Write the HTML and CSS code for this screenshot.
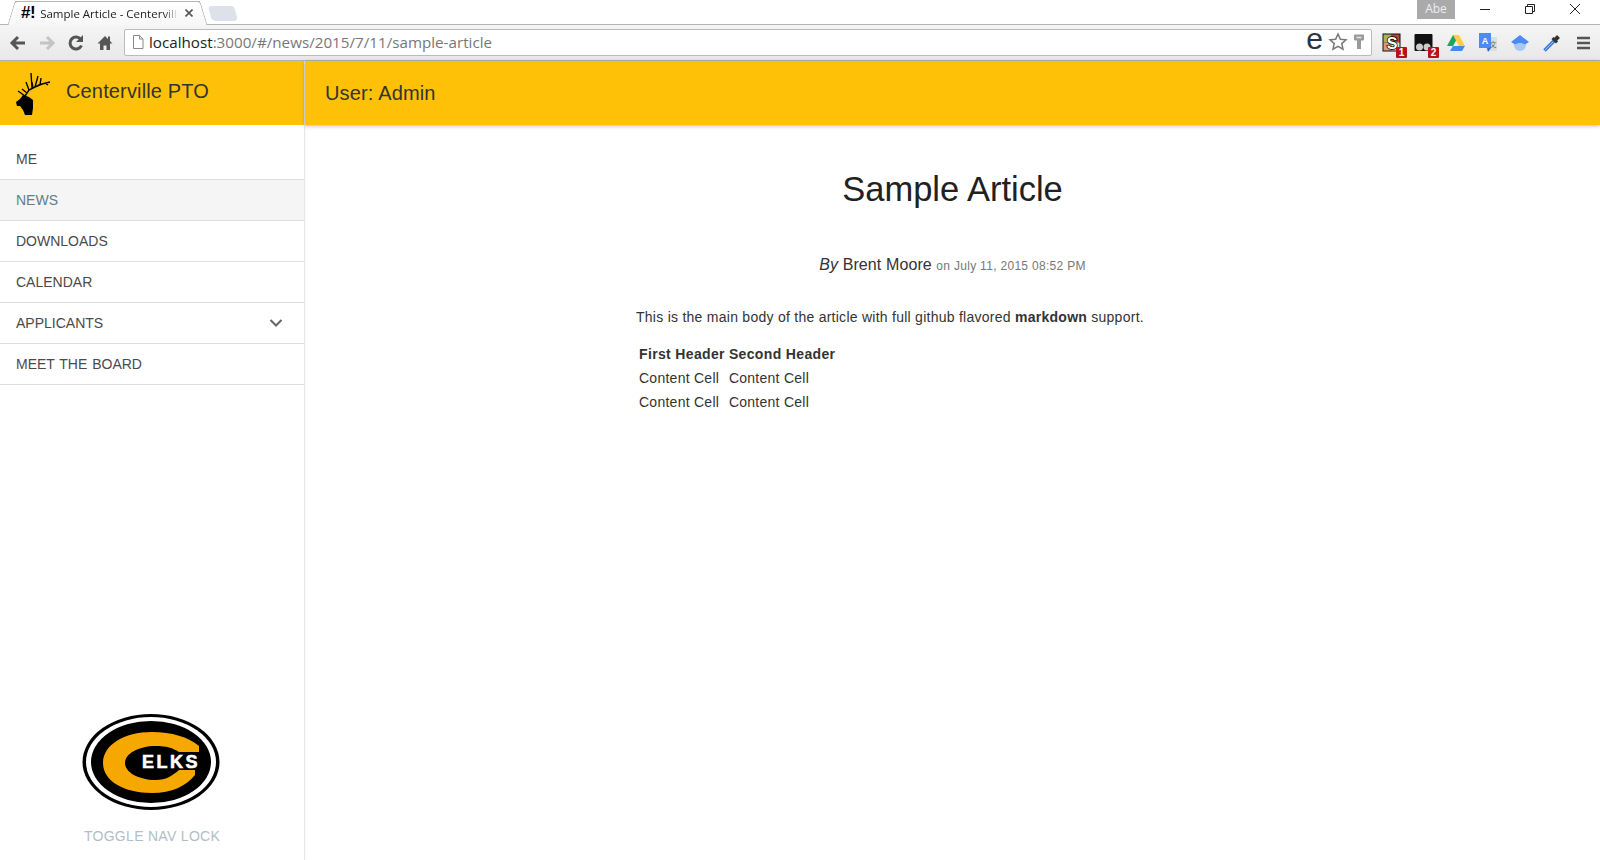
FILE: index.html
```html
<!DOCTYPE html>
<html>
  <head>
    <title>Sample Article - Centerville PTO</title>
    <link rel="stylesheet" href="styles.css">
  </head>
  <body>
    <div class="tabstrip">
      <div class="tab">
        <span class="favicon">#!</span>
        <span class="tab-title">Sample Article - Centerville PTO</span>
        <svg class="tab-close" width="8" height="8" viewBox="0 0 8 8"><path d="M.5.5l7 7M7.500.5l-7 7" stroke="#555" stroke-width="1.600"/></svg>
      </div>
      <div class="newtab"></div>
      <div class="window-controls">
        <span class="profile">Abe</span>
        <svg class="win" width="16" height="16" viewBox="0 0 16 16"><path d="M3 8.500h10" stroke="#222" fill="none"/></svg>
        <svg class="win" width="16" height="16" viewBox="0 0 16 16"><path d="M3.500 5.500h7v7h-7zM5.500 5.500v-2h7v7h-2" stroke="#222" fill="none"/></svg>
        <svg class="win" width="16" height="16" viewBox="0 0 16 16"><path d="M3 3l10 10M13 3L3 13" stroke="#222" fill="none"/></svg>
      </div>
    </div>
    <div class="toolbar">
      <svg class="nav-btn" width="20" height="20" viewBox="0 0 20 20"><path d="M17 10H5M10 4l-6 6 6 6" stroke="#555" stroke-width="3" fill="none"/></svg>
      <svg class="nav-btn" width="20" height="20" viewBox="0 0 20 20"><path d="M3 10h12M10 4l6 6-6 6" stroke="#c4c4c4" stroke-width="3" fill="none"/></svg>
      <svg class="nav-btn" width="20" height="20" viewBox="0 0 20 20"><path d="M15.500 12.500a6 6 0 1 1-.6-6" stroke="#555" stroke-width="3" fill="none"/><path d="M17 2v7h-7z" fill="#555"/></svg>
      <svg class="nav-btn" width="20" height="20" viewBox="0 0 20 20"><path d="M10 3L2.500 10.500H5V17h3.500v-4.500h3V17H15v-6.500h2.500L15 8V3.500h-2v2.500z" fill="#555"/></svg>
      <div class="omnibox">
        <svg width="14" height="16" viewBox="0 0 14 16"><path d="M2.500 1.500h6l3.500 3.500v9.500h-9.500zM8.500 1.500V5H12" stroke="#8a8a8a" fill="#fff"/></svg>
        <span class="url"><span class="host">localhost</span>:3000/#/news/2015/7/11/sample-article</span>
        <span class="omni-e">e</span>
        <svg class="star" width="20" height="20" viewBox="0 0 20 20"><path d="M10 2l2.400 5.200 5.600.6-4.200 3.800 1.200 5.600L10 14.300l-5 2.900 1.200-5.600L2 7.800l5.600-.6z" stroke="#777" stroke-width="1.500" fill="#fff"/></svg>
        <svg width="12" height="18" viewBox="0 0 12 18"><path d="M1 2.500a1 1 0 0 1 1-1h8a1 1 0 0 1 1 1v4a1 1 0 0 1-1 1H8v8.500H4V7.500H2a1 1 0 0 1-1-1z" fill="#9a9a9a"/><path d="M3.500 4.500h5" stroke="#e4e4e4" stroke-width="1.500"/></svg>
      </div>
      <div class="extensions">
        <span class="ext">
          <svg width="20" height="20" viewBox="0 0 20 20"><rect x=".5" y=".5" width="18" height="18" fill="#111"/><rect x="1.500" y="1.500" width="8" height="8" fill="#a8b45a"/><rect x="9.500" y="1.500" width="8" height="8" fill="#b04a36"/><rect x="1.500" y="9.500" width="8" height="8" fill="#d99a7c"/><rect x="9.500" y="9.500" width="8" height="8" fill="#ddd"/><text x="10" y="15.500" class="ext-s">S</text></svg>
          <span class="badge">1</span>
        </span>
        <span class="ext">
          <svg width="20" height="20" viewBox="0 0 20 20"><rect x=".5" y="1" width="18" height="17" rx="1" fill="#111"/><circle cx="5.500" cy="14" r="3.500" fill="#ccc"/><circle cx="13" cy="14" r="3.500" fill="#ccc"/></svg>
          <span class="badge">2</span>
        </span>
        <svg width="20" height="18" viewBox="0 0 20 18"><path d="M7 1h6l-6 11H1z" fill="#1ea362"/><path d="M7 1h6l6 11h-6z" fill="#ffcd40"/><path d="M4 17l3-5h12l-3 5z" fill="#4688f1"/></svg>
        <svg width="20" height="20" viewBox="0 0 20 20"><path d="M8 4h11v14H8z" fill="#ddd"/><path d="M1 0h12v15H1z" fill="#4c8bf5"/><path d="M9 15h4l-3 4z" fill="#3367c9"/><text x="7" y="10.500" class="ext-a">A</text><text x="15" y="14" class="ext-b">&#25991;</text></svg>
        <svg width="20" height="20" viewBox="0 0 20 20"><circle cx="10" cy="12" r="6" fill="#a9c8f5"/><path d="M10 2l9 7-4 2.500c-3-2-7-2-10 0L1 9z" fill="#4c8bf5"/></svg>
        <svg width="20" height="20" viewBox="0 0 20 20"><path d="M2.500 17.500L12 8" stroke="#3f78d8" stroke-width="3.500"/><path d="M3 17L11 9" stroke="#9cbdf0" stroke-width="1"/><path d="M10.500 5l4.500 4.500" stroke="#333" stroke-width="3"/><path d="M13 7l3.500-3.500" stroke="#333" stroke-width="4"/></svg>
        <svg class="menu" width="16" height="16" viewBox="0 0 16 16"><path d="M1 3h13M1 8h13M1 13h13" stroke="#555" stroke-width="2.500"/></svg>
      </div>
    </div>

    <div class="app">
      <aside class="sidebar">
        <div class="brand">
          <svg class="elk" width="38" height="46" viewBox="0 0 38 46">
            <path d="M1 32l4-3 3-4 6 2 4 3v8l-1 7h-7l-2-5-3-4-3 0z" fill="#000"/>
            <path d="M10 26l4-6 6-3 7-3 8-2M17 18L16 3M20 17l3-11M14 20l-3-8M25 15l1-7M12 23L7 19M10 26L3 21M30 13l3 2M18 18l-1-6M22 16l4-2" stroke="#000" stroke-width="1.400" fill="none"/>
          </svg>
          <span class="brand-name">Centerville PTO</span>
        </div>
        <nav class="side-nav">
          <a class="side-link" href="#">ME</a>
          <a class="side-link active" href="#">NEWS</a>
          <a class="side-link" href="#">DOWNLOADS</a>
          <a class="side-link" href="#">CALENDAR</a>
          <a class="side-link" href="#">APPLICANTS
            <svg width="14" height="10" viewBox="0 0 14 10"><path d="M1.500 2l5.500 5.500L12.500 2" stroke="#666" stroke-width="2" fill="none"/></svg>
          </a>
          <a class="side-link" href="#">MEET THE BOARD</a>
        </nav>
        <div class="side-foot">
          <svg class="elks-logo" width="138" height="98" viewBox="0 0 138 98">
            <ellipse cx="69" cy="49" rx="68.500" ry="48" fill="#000"/>
            <ellipse cx="69" cy="49" rx="65" ry="45" fill="#fff"/>
            <ellipse cx="69" cy="49" rx="60" ry="41" fill="#000"/>
            <path d="M117 33C106 24 90 19 70 19C42 19 21 32 21 50C21 68 42 80 70 80C90 80 104 73 113 62V57H97C90 63 84 67 74 67C56 67 43 59 43 50C43 41 56 33 74 33C84 33 91 35 97 39H117z" fill="#f7a800"/>
            <text x="60" y="55" class="elks-text">ELKS</text>
          </svg>
          <a class="toggle-lock" href="#">TOGGLE NAV LOCK</a>
        </div>
      </aside>
      <div class="content">
        <header class="topbar">User: Admin</header>
        <main class="article">
          <h1>Sample Article</h1>
          <p class="byline"><em>By</em> Brent Moore <small>on July 11, 2015 08:52 PM</small></p>
          <div class="article-body">
            <p>This is the main body of the article with full github flavored <strong>markdown</strong> support.</p>
            <table>
              <tr>
                <th>First Header</th>
                <th>Second Header</th>
              </tr>
              <tr>
                <td>Content Cell</td>
                <td>Content Cell</td>
              </tr>
              <tr>
                <td>Content Cell</td>
                <td>Content Cell</td>
              </tr>
            </table>
          </div>
        </main>
      </div>
    </div>
  </body>
</html>
```
FILE: styles.css
```css
/* Browser chrome */
html, body {
  height: 100%;
}
body {
  display: flex;
  flex-direction: column;
  font-family: "Liberation Sans", Arial, sans-serif;
  height: 860px;
  margin: 0;
  overflow: hidden;
}
.tabstrip {
  align-items: flex-end;
  background-color: #fff;
  display: flex;
  height: 24px;
}
.tab {
  align-items: center;
  background: linear-gradient(#fff, #f7f7f7);
  border-top: 1px solid #b5b5b5;
  box-sizing: border-box;
  display: flex;
  height: 24px;
  margin-bottom: -1px;
  margin-left: 15px;
  padding: 0 7px 1px 6px;
  position: relative;
  width: 185px;
  z-index: 1;
}
.tab::before,
.tab::after {
  background: linear-gradient(#fff, #f7f7f7);
  bottom: 0;
  content: "";
  position: absolute;
  top: -1px;
  width: 14px;
  z-index: -1;
}
.tab::before {
  border-left: 1px solid #b5b5b5;
  border-radius: 3px 0 0 0;
  border-top: 1px solid #b5b5b5;
  left: -4px;
  transform: skewX(-17deg);
}
.tab::after {
  border-radius: 0 3px 0 0;
  border-right: 1px solid #b5b5b5;
  border-top: 1px solid #b5b5b5;
  right: -4px;
  transform: skewX(17deg);
}
.favicon {
  font-size: 17px;
  font-weight: bold;
  letter-spacing: -0.5px;
  margin-right: 5px;
}
.tab-title {
  color: #222;
  flex: 1;
  font-family: "Open Sans", sans-serif;
  font-size: 11.5px;
  mask-image: linear-gradient(to right, #000 90%, transparent);
  overflow: hidden;
  white-space: nowrap;
}
.tab-close {
  margin-left: 7px;
}
.newtab {
  background-color: #dde2ea;
  border-radius: 3px 3px 4px 4px;
  height: 15px;
  margin: 0 0 3px 10px;
  transform: skewX(15deg);
  width: 26px;
}
.window-controls {
  align-items: flex-start;
  align-self: flex-start;
  display: flex;
  margin-left: auto;
}
.profile {
  background-color: #aaa;
  color: #eee;
  font-family: "Open Sans", sans-serif;
  font-size: 12px;
  height: 19px;
  line-height: 18px;
  margin-right: 22px;
  text-align: center;
  width: 38px;
}
.win {
  margin: 1px 29px 0 0;
}
.win:last-child {
  margin-right: 17px;
}
.toolbar {
  align-items: center;
  background: linear-gradient(#f5f5f5, #e8e8e8);
  border-bottom: 1px solid #b4b4b4;
  border-top: 1px solid #b4b4b4;
  box-sizing: border-box;
  display: flex;
  height: 37px;
  padding: 0 8px 0 8px;
}
.nav-btn {
  margin-right: 9px;
}
.omnibox {
  align-items: center;
  background-color: #fff;
  border: 1px solid #bbb;
  border-radius: 2px;
  box-sizing: border-box;
  display: flex;
  flex: 1;
  gap: 3px;
  height: 27px;
  margin-bottom: 1px;
  padding: 0 6px;
}
.url {
  color: #777;
  flex: 1;
  font-family: "Open Sans", sans-serif;
  font-size: 15.2px;
  margin-left: 1px;
}
.host {
  color: #222;
}
.omni-e {
  color: #2a3442;
  font-size: 30px;
  line-height: 28px;
  margin-right: 2px;
  margin-top: -6px;
}
.star {
  margin-right: 2px;
}
.extensions {
  align-items: center;
  display: flex;
  gap: 12px;
  margin-left: 10px;
}
.ext {
  display: block;
  height: 20px;
  position: relative;
  width: 20px;
}
.ext-s {
  fill: #fff;
  font-size: 16px;
  font-weight: bold;
  paint-order: stroke;
  stroke: #000;
  stroke-width: 1.5;
  text-anchor: middle;
}
.ext-a {
  fill: #fff;
  font-size: 9px;
  font-weight: bold;
  text-anchor: middle;
}
.ext-b {
  fill: #666;
  font-family: "Noto Sans CJK SC", sans-serif;
  font-size: 7px;
  text-anchor: middle;
}
.badge {
  background-color: #b5121b;
  border-radius: 1px;
  bottom: -5px;
  color: #fff;
  font-size: 10px;
  font-weight: bold;
  height: 11px;
  line-height: 11px;
  position: absolute;
  right: -5px;
  text-align: center;
  width: 11px;
}
.menu {
  margin-left: 2px;
}

/* App shell */
.app {
  display: flex;
  flex: 1;
  min-height: 0;
}
.sidebar {
  border-right: 1px solid #e6e6e6;
  box-shadow: 1px 0 3px rgba(0, 0, 0, 0.04);
  display: flex;
  flex-direction: column;
  flex-shrink: 0;
  width: 304px;
}
.brand {
  align-items: center;
  background-color: #ffc107;
  display: flex;
  height: 64px;
  padding-left: 15px;
}
.brand-name {
  color: #333;
  font-size: 20px;
  letter-spacing: 0.15px;
  margin-bottom: 4px;
  margin-left: 13px;
}
.side-nav {
  display: flex;
  flex-direction: column;
  padding-top: 14px;
}
.side-link {
  align-items: center;
  border-bottom: 1px solid #ddd;
  color: #4a4a4a;
  display: flex;
  font-size: 14px;
  height: 40px;
  justify-content: space-between;
  padding: 0 21px 0 16px;
  text-decoration: none;
  word-spacing: 1px;
}
.side-link.active {
  background-color: #f5f5f5;
  color: #607d8b;
}
.side-foot {
  align-items: center;
  display: flex;
  flex-direction: column;
  margin-top: auto;
  padding-bottom: 16px;
}
.elks-logo {
  margin-bottom: 17px;
  margin-right: 2px;
}
.elks-text {
  fill: #fff;
  font-family: "Liberation Sans", sans-serif;
  font-size: 18px;
  font-weight: bold;
  letter-spacing: 2.5px;
  stroke: #fff;
  stroke-width: 0.6;
}
.toggle-lock {
  color: #b0bec5;
  font-size: 14px;
  letter-spacing: 0.3px;
  text-decoration: none;
}

/* Main column */
.content {
  display: flex;
  flex: 1;
  flex-direction: column;
}
.topbar {
  background-color: #ffc107;
  box-shadow: 0 1px 4px rgba(0, 0, 0, 0.28);
  color: #333;
  font-size: 20px;
  height: 64px;
  letter-spacing: 0.15px;
  line-height: 65px;
  padding-left: 20px;
}
.article {
  padding: 0 20px;
}
h1 {
  color: #212121;
  font-size: 34.5px;
  font-weight: normal;
  line-height: 40px;
  margin: 44px 0 0;
  text-align: center;
}
.byline {
  color: #333;
  font-size: 16px;
  letter-spacing: 0.1px;
  line-height: 20px;
  margin: 46px 0 0;
  text-align: center;
}
.byline small {
  color: #777;
  font-size: 12px;
  letter-spacing: 0.3px;
}
.article-body {
  color: #333;
  font-size: 14px;
  letter-spacing: 0.26px;
  margin-left: 311px;
}
.article-body p {
  line-height: 20px;
  margin: 31px 0 15px;
}
table {
  border-collapse: collapse;
  margin-left: 1px;
}
th, td {
  line-height: 20px;
  padding: 2px;
  text-align: left;
}
th {
  letter-spacing: 0.35px;
}
```
